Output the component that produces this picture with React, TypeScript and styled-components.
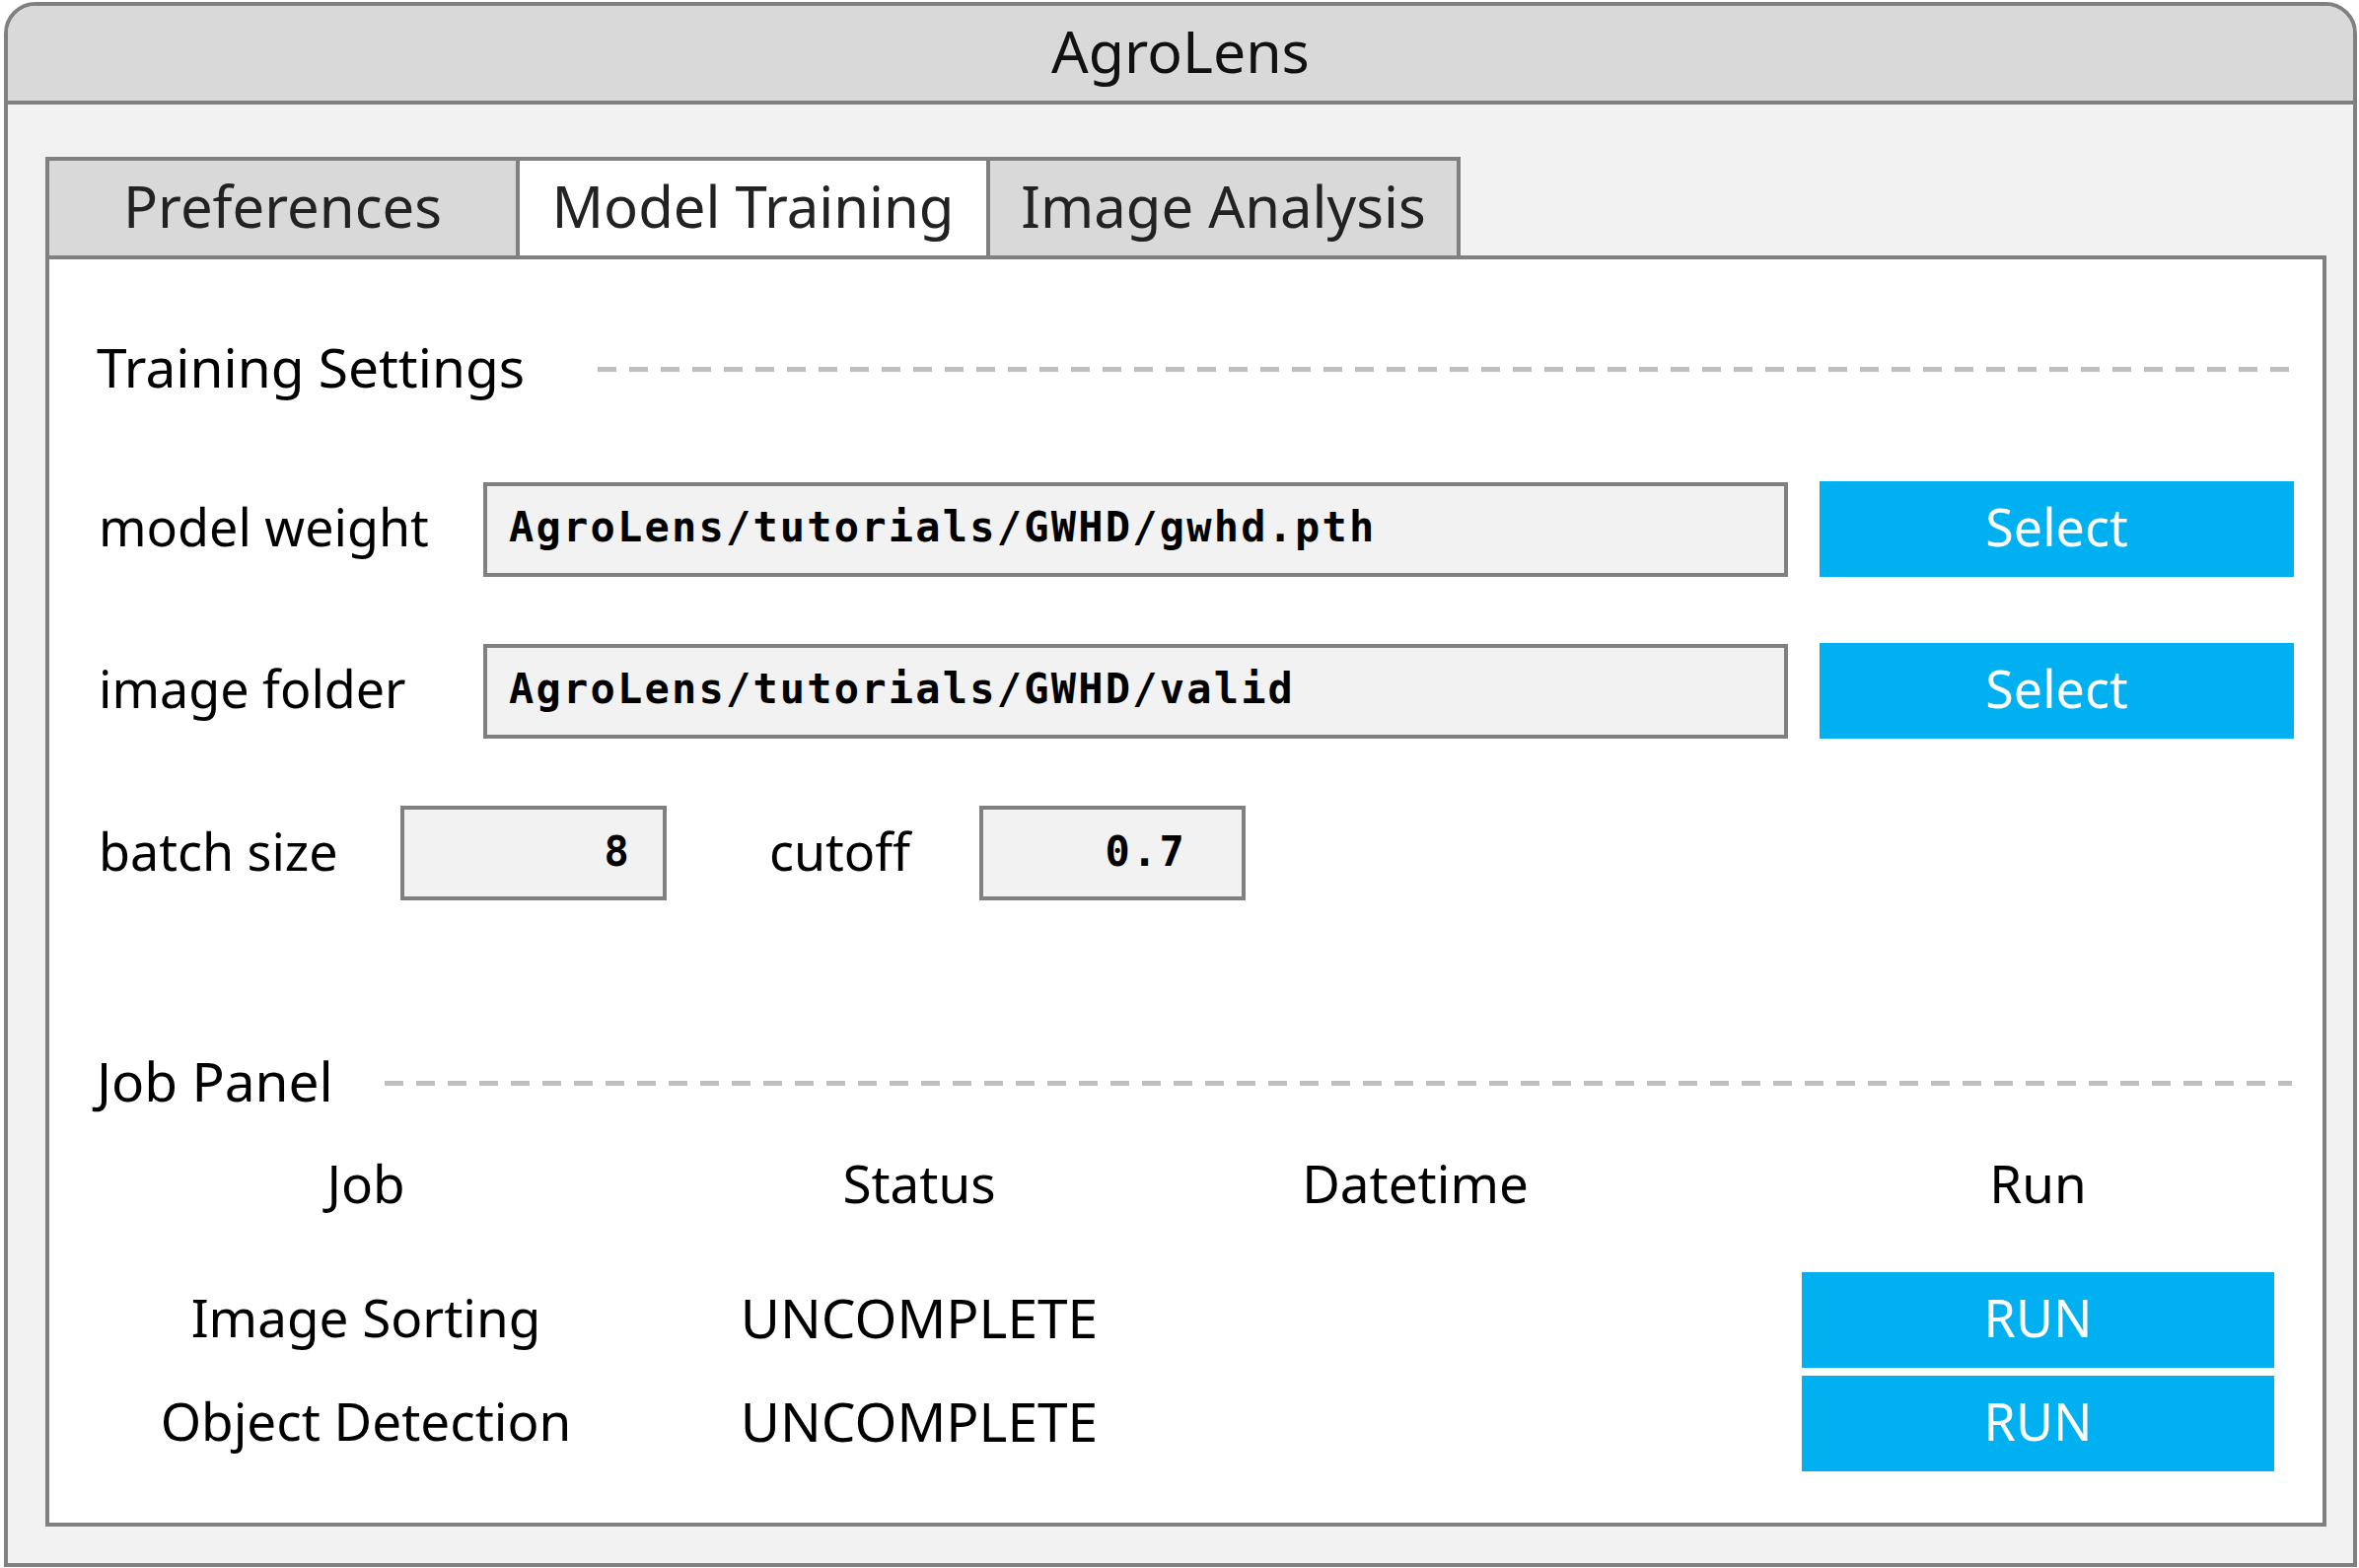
import React from 'react';
import styled, { createGlobalStyle, css } from 'styled-components';

const GlobalStyle = createGlobalStyle`
    html, body {
        margin: 0;
        padding: 0;
        background: #ffffff;
    }
    body {
        font-family: "Noto Sans", "Liberation Sans", sans-serif;
        color: #000;
    }
`

// Noto Sans sits a little low in its line box, lift it a bit
const lift = css`
    padding-bottom: 6px;
    box-sizing: border-box;
`

const Window = styled.div`
    box-sizing: border-box;
    margin: 2px 2px 0 4px;
    width: 2386px;
    height: 1587px;
    border: 4px solid #808080;
    border-radius: 32px 32px 0 0;
    background: #f2f2f2;
    display: flex;
    flex-direction: column;
    overflow: hidden;
`

const TitleBar = styled.div`
    ${lift};
    height: 100px;
    flex-shrink: 0;
    border-bottom: 4px solid #808080;
    background: #d9d9d9;
    display: flex;
    align-items: center;
    justify-content: center;
    font-size: 59px;
    color: #111;
`

const Body = styled.div`
    flex: 1;
    display: flex;
    flex-direction: column;
    padding: 53px 27px 37px 38px;
    min-height: 0;
`

const Tabs = styled.div`
    display: flex;
    height: 100px;
    flex-shrink: 0;
`

const Tab = styled.div<{ $active?: boolean }>`
    ${lift};
    width: 481px;
    height: 100px;
    border: 4px solid #808080;
    border-bottom: none;
    background: ${p => (p.$active ? '#ffffff' : '#d9d9d9')};
    display: flex;
    align-items: center;
    justify-content: center;
    font-size: 58px;
    color: #222;
    & + & {
        margin-left: -4px;
    }
`

const Panel = styled.div`
    flex: 1;
    border: 4px solid #808080;
    background: #ffffff;
    padding: 81px 29px 0 48px;
`

const SectionHeader = styled.div<{ $top?: number }>`
    display: flex;
    align-items: center;
    height: 60px;
    margin-top: ${p => p.$top ?? 0}px;
`

const SectionTitle = styled.div<{ $width: number }>`
    ${lift};
    width: ${p => p.$width}px;
    flex-shrink: 0;
    font-size: 55px;
    white-space: nowrap;
`

const Dashes = styled.div`
    flex: 1;
    height: 5px;
    margin-right: 2px;
    background: repeating-linear-gradient(to right, #bfbfbf 0 19px, transparent 19px 32px);
`

const FieldRow = styled.div<{ $top: number }>`
    display: grid;
    grid-template-columns: 392px 1fr 481px;
    align-items: center;
    margin-top: ${p => p.$top}px;
`

const Label = styled.div<{ $width?: number; $pad?: number }>`
    ${lift};
    font-size: 52px;
    white-space: nowrap;
    width: ${p => (p.$width ? `${p.$width}px` : 'auto')};
    padding-left: ${p => p.$pad ?? 2}px;
`

const mono = css`
    font-family: "DejaVu Sans Mono", "Liberation Mono", monospace;
    font-weight: bold;
    font-size: 42px;
    letter-spacing: 2.2px;
    color: #000;
`

const PathBox = styled.div`
    ${mono};
    box-sizing: border-box;
    height: 96px;
    margin-right: 32px;
    border: 4px solid #808080;
    background: #f2f2f2;
    padding: 0 0 4px 22px;
    display: flex;
    align-items: center;
    white-space: nowrap;
`

const BlueButton = styled.button`
    box-sizing: border-box;
    height: 97px;
    width: 100%;
    border: none;
    background: #00b0f0;
    color: #ffffff;
    font-family: "Noto Sans", "Liberation Sans", sans-serif;
    font-size: 52px;
    display: flex;
    align-items: center;
    justify-content: center;
    padding: 0 0 6px;
    cursor: pointer;
`

const NumberRow = styled.div<{ $top: number }>`
    display: flex;
    align-items: center;
    margin-top: ${p => p.$top}px;
`

const NumberBox = styled.div<{ $padRight: number }>`
    ${mono};
    box-sizing: border-box;
    width: 270px;
    height: 96px;
    border: 4px solid #808080;
    background: #f2f2f2;
    display: flex;
    align-items: center;
    justify-content: flex-end;
    padding: 0 ${p => p.$padRight}px 4px 0;
`

const jobColumns = css`
    display: grid;
    grid-template-columns: 546px 576px 430px 1fr;
    align-items: center;
`

const JobHead = styled.div`
    ${jobColumns};
    height: 60px;
    margin-top: 35px;
`

const JobList = styled.div`
    display: flex;
    flex-direction: column;
    gap: 8px;
    margin-top: 67px;
`

const JobRow = styled.div`
    ${jobColumns};
    height: 97px;
`

const Cell = styled.div<{ $size?: number }>`
    ${lift};
    font-size: ${p => p.$size ?? 53}px;
    text-align: center;
    white-space: nowrap;
`

const RunCell = styled.div<{ $flush?: boolean }>`
    box-sizing: border-box;
    justify-self: end;
    width: 479px;
    margin-right: 20px;
    font-size: 53px;
    text-align: center;
    padding-bottom: ${p => (p.$flush ? 0 : 6)}px;
`

type Job = { name: string; status: string; datetime: string }

const jobs: Job[] = [
    { name: 'Image Sorting', status: 'UNCOMPLETE', datetime: '' },
    { name: 'Object Detection', status: 'UNCOMPLETE', datetime: '' },
]

const App: React.FC = () => {
    return (
        <>
            <GlobalStyle />
            <Window>
                <TitleBar>AgroLens</TitleBar>
                <Body>
                    <Tabs>
                        <Tab>Preferences</Tab>
                        <Tab $active>Model Training</Tab>
                        <Tab>Image Analysis</Tab>
                    </Tabs>
                    <Panel>
                        <SectionHeader>
                            <SectionTitle $width={508}>Training Settings</SectionTitle>
                            <Dashes />
                        </SectionHeader>

                        <FieldRow $top={84}>
                            <Label>model weight</Label>
                            <PathBox>AgroLens/tutorials/GWHD/gwhd.pth</PathBox>
                            <BlueButton>Select</BlueButton>
                        </FieldRow>
                        <FieldRow $top={67}>
                            <Label>image folder</Label>
                            <PathBox>AgroLens/tutorials/GWHD/valid</PathBox>
                            <BlueButton>Select</BlueButton>
                        </FieldRow>

                        <NumberRow $top={68}>
                            <Label $width={308}>batch size</Label>
                            <NumberBox $padRight={32}>8</NumberBox>
                            <Label $width={317} $pad={104}>cutoff</Label>
                            <NumberBox $padRight={56}>0.7</NumberBox>
                        </NumberRow>

                        <SectionHeader $top={155}>
                            <SectionTitle $width={292}>Job Panel</SectionTitle>
                            <Dashes />
                        </SectionHeader>

                        <JobHead>
                            <Cell>Job</Cell>
                            <Cell>Status</Cell>
                            <Cell>Datetime</Cell>
                            <RunCell>Run</RunCell>
                        </JobHead>
                        <JobList>
                            {jobs.map(job => (
                                <JobRow key={job.name}>
                                    <Cell>{job.name}</Cell>
                                    <Cell $size={55}>{job.status}</Cell>
                                    <Cell>{job.datetime}</Cell>
                                    <RunCell $flush>
                                        <BlueButton>RUN</BlueButton>
                                    </RunCell>
                                </JobRow>
                            ))}
                        </JobList>
                    </Panel>
                </Body>
            </Window>
        </>
    )
}

export default App;
